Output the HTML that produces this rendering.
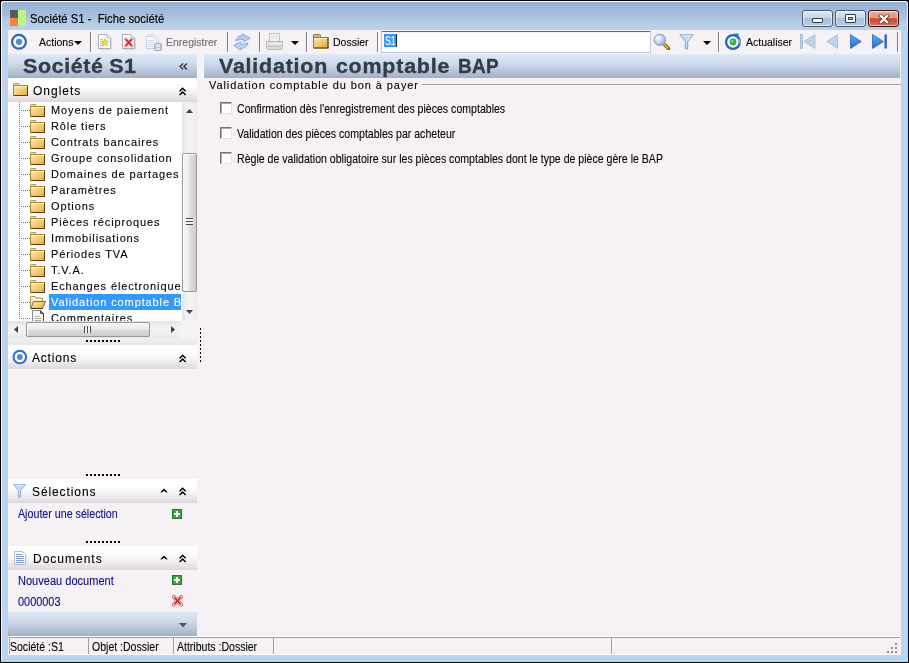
<!DOCTYPE html>
<html><head><meta charset="utf-8">
<style>
*{box-sizing:border-box}
html,body{margin:0;padding:0}
body{will-change:transform;width:909px;height:663px;overflow:hidden;position:relative;background:#000;font-family:"Liberation Sans",sans-serif;color:#000}
.a{position:absolute}
.t{position:absolute;white-space:pre;line-height:1;-webkit-text-stroke:0.1px currentColor}
.frame{left:1px;top:1px;width:907px;height:661px;background:#bed3ef;border-radius:3px 3px 0 0}
.titlebar{left:1px;top:1px;width:907px;height:29px;border-radius:3px 3px 0 0;border-top:1px solid #fff;border-left:1px solid #fff;border-right:1px solid #dfefff;background:linear-gradient(#97b3d4 0px,#a3bddb 12px,#b5cbe6 20px,#bad2ea 28px)}
.lframe{left:1px;top:30px;width:1px;height:632px;background:#f2f9ff}
.rframe{left:906px;top:30px;width:2px;height:632px;background:#9fdcf8}
.bframe{left:1px;top:660px;width:907px;height:2px;background:#9fe0f8}
.content{left:8px;top:30px;width:893px;height:625px;background:#f6f1f5}
.hdr{background:linear-gradient(#dde9f8 0%,#d0ddee 35%,#b7c7da 70%,#a2b0c6 100%)}
.ph{background:linear-gradient(#ffffff 0%,#fdfcfd 40%,#ebe9ec 75%,#dbd9dc 100%)}
.sep{position:absolute;top:32px;width:1px;height:20px;background:#7d7d7d;border-right:1px solid #fff;width:2px}
.tb{font-size:10.5px}
.big{font-size:20px;font-weight:bold;color:#333d47;transform:scaleX(1.07);letter-spacing:0.62px;word-spacing:1.5px;transform-origin:0 0;-webkit-text-stroke:0.35px #333d47}
.tree{font-size:11px;letter-spacing:0.88px}
.lnk{color:#0c0c86;font-size:12px;transform:scaleX(0.89);transform-origin:0 0}
.st{font-size:12px;transform:scaleX(0.877);transform-origin:0 0}
.cl{font-size:12.4px;transform:scaleX(0.853);transform-origin:0 0}
.tbtn{top:10px;width:31px;height:17px;border:1px solid #4d5d75;border-radius:3px;background:linear-gradient(#dfe9f5 0%,#c6d6e9 45%,#a9c0da 50%,#b9cfe6 100%);box-shadow:inset 0 0 0 1px rgba(255,255,255,.55)}
.close{border-color:#3a1410;background:linear-gradient(#eeb0a4 0%,#e29884 45%,#c9452b 52%,#d8735c 100%)}
.cb{position:absolute;width:12px;height:12px;border:1px solid #747474;border-right-color:#e2e2e2;border-bottom-color:#e2e2e2;background:#fff;box-shadow:inset 1px 1px 0 #a8a8a8}
</style></head><body>
<svg width="0" height="0" style="position:absolute"><defs><linearGradient id="fg2" x1="0" y1="0" x2="1" y2="1"><stop offset="0" stop-color="#fcecb4"/><stop offset="0.45" stop-color="#f4d27a"/><stop offset="1" stop-color="#e6a93a"/></linearGradient></defs></svg>
<div class="a frame"></div>
<div class="a titlebar"></div>
<div class="a lframe"></div>
<div class="a rframe"></div>
<div class="a bframe"></div>

<!-- app icon -->
<div class="a" style="left:10px;top:10px;width:8px;height:8px;background:#5c5c58"></div>
<div class="a" style="left:10px;top:18px;width:8px;height:8px;background:#f38143"></div>
<div class="a" style="left:18px;top:10px;width:8px;height:16px;background:#bbf588"></div>
<div class="t" style="left:30px;top:13px;font-size:12px;-webkit-text-stroke:0.15px #000;transform:scaleX(0.94);transform-origin:0 0;color:#000">Société S1 -  Fiche société</div>

<div class="a content"></div>


<!-- title buttons -->
<div class="a tbtn" style="left:802px"><div class="a" style="left:9px;top:7px;width:11px;height:5px;border:1px solid #2d3a4a;border-radius:1px;background:#fff"></div></div>
<div class="a tbtn" style="left:835px"><div class="a" style="left:9px;top:3px;width:11px;height:9px;border:1px solid #2d3a4a;border-radius:1px;background:#fff"><div class="a" style="left:2px;top:2px;width:5px;height:3px;border:1px solid #3a4656;background:#a8b4c4"></div></div></div>
<div class="a tbtn close" style="left:868px"><svg class="a" style="left:9px;top:3px" width="12" height="10" viewBox="0 0 12 10"><path d="M2.8 1.8 L9.2 8.2 M9.2 1.8 L2.8 8.2" stroke="#4a2018" stroke-width="4" stroke-linecap="square" opacity="0.7"/><path d="M2.8 1.8 L9.2 8.2 M9.2 1.8 L2.8 8.2" stroke="#fff" stroke-width="2.3" stroke-linecap="square"/></svg></div>

<!-- toolbar -->
<svg class="a" style="left:10px;top:33px" width="18" height="18" viewBox="0 0 18 18"><circle cx="9" cy="8.8" r="6.9" fill="#f8fbff" stroke="#2f64b8" stroke-width="2.2"/><circle cx="9" cy="8.8" r="3.1" fill="#4a8ae4"/></svg>
<div class="t tb" style="left:39px;top:37px">Actions</div>
<svg class="a" style="left:74px;top:41px" width="8" height="4" viewBox="0 0 8 4"><path d="M0 0H8L4 4Z" fill="#000"/></svg>
<div class="sep" style="left:90px"></div>
<!-- new -->
<svg class="a" style="left:98px;top:34px" width="15" height="16" viewBox="0 0 15 16"><path d="M0.5 0.5H9L12.5 4V14.5H0.5Z" fill="#fdfdfd" stroke="#aab0b8"/><path d="M9 0.5V4H12.5" fill="#e8ecf2" stroke="#b8bec8"/><path d="M13.5 4.5V15.5H1.5" stroke="#d8dce2" fill="none"/><path d="M2 5.5h3M2 7.5h3M2 9.5h3M2 11.5h3" stroke="#a8c0e8"/><path d="M7 4.6L8.1 7.1L10.7 7.3L8.7 9L9.4 11.6L7 10.2L4.6 11.6L5.3 9L3.3 7.3L5.9 7.1Z" fill="#f0ea30" stroke="#c8b020" stroke-width="0.7"/></svg>
<!-- delete -->
<svg class="a" style="left:122px;top:34px" width="15" height="16" viewBox="0 0 15 16"><path d="M0.5 0.5H9L12.5 4V14.5H0.5Z" fill="#fdfdfd" stroke="#aab0b8"/><path d="M9 0.5V4H12.5" fill="#e8ecf2" stroke="#b8bec8"/><path d="M13.5 4.5V15.5H1.5" stroke="#d8dce2" fill="none"/><path d="M3.5 5 L10 12 M10 5 L3.5 12" stroke="#f4a4a4" stroke-width="3.2" stroke-linecap="round"/><path d="M3.8 5.3 L9.7 11.7 M9.7 5.3 L3.8 11.7" stroke="#dc1c1c" stroke-width="1.5"/></svg>
<!-- save disabled -->
<svg class="a" style="left:146px;top:34px" width="17" height="17" viewBox="0 0 17 17"><path d="M2.5 0.5H9L12.5 4V12.5H2.5Z" fill="#f6f6fa" stroke="#d4d6e0"/><path d="M0.5 2.5H7L10.5 6V14.5H0.5Z" fill="#f8f8fc" stroke="#ccd0dc"/><path d="M2 6.5h6M2 8.5h6M2 10.5h6M2 12.5h5" stroke="#d0d8ea"/><rect x="8.5" y="9.5" width="7" height="7" rx="1" fill="#c4c0de" stroke="#aaa6cc"/><rect x="10" y="10.5" width="4" height="2" fill="#ecebf6"/><rect x="10" y="14" width="4" height="2" fill="#e0def0"/></svg>
<div class="t tb" style="left:166px;top:37px;color:#6d6d6d">Enregistrer</div>
<div class="sep" style="left:227px"></div>
<!-- refresh disabled -->
<svg class="a" style="left:230px;top:30px" width="24" height="24" viewBox="0 0 24 24"><path d="M5.8 11.2 C6.3 7.2 9 5.6 12.4 5.6 L12.2 3.8 L20.2 8.2 L13.8 11.8 L13.4 9.6 C10.2 9.3 7.6 9.8 5.8 11.2Z" fill="#b4cdf2" stroke="#86a2d2" stroke-width="0.9" stroke-linejoin="round"/><path d="M18 12.6 C17.4 16.6 14.6 18.3 10.8 18.4 L10.9 20.2 L3.8 15.6 L10.4 11.8 L10.7 14.1 C13.9 14.1 16.2 13.6 18 12.6Z" fill="#b4d2f4" stroke="#86a2d2" stroke-width="0.9" stroke-linejoin="round"/></svg>
<div class="sep" style="left:259px"></div>
<!-- printer disabled -->
<svg class="a" style="left:265px;top:33px" width="19" height="17" viewBox="0 0 19 17"><rect x="4.5" y="0.5" width="10" height="8" fill="#f2f2f2" stroke="#c4c4c4"/><path d="M6 3h7M6 5h7" stroke="#dedede"/><path d="M1.5 8.5 H17.5 V14.5 Q17.5 16.5 15.5 16.5 H3.5 Q1.5 16.5 1.5 14.5Z" fill="#dcdcdc" stroke="#b8b8b8"/><path d="M2 10.5H17" stroke="#f6f6f6"/><path d="M3 13.5H16" stroke="#c0c0c0"/></svg>
<svg class="a" style="left:291px;top:41px" width="8" height="4" viewBox="0 0 8 4"><path d="M0 0H8L4 4Z" fill="#000"/></svg>
<div class="sep" style="left:306px"></div>
<!-- folder -->
<svg class="a" style="left:313px;top:34px" width="16" height="15" viewBox="0 0 16 15"><defs><linearGradient id="fg" x1="0" y1="0" x2="1" y2="1"><stop offset="0" stop-color="#fbe6a4"/><stop offset="0.55" stop-color="#f0c868"/><stop offset="1" stop-color="#e0a238"/></linearGradient></defs><path d="M0.5 3.5 V1.2 Q0.5 0.5 1.2 0.5 H6.5 Q7.5 0.5 7.5 1.5 V3.5Z" fill="#c8b88a" stroke="#8a7a50"/><rect x="0.5" y="3.5" width="14.5" height="10.5" fill="url(#fg)" stroke="#9a7a38"/><path d="M1 14H15.5M15 4V14" stroke="#5e4614"/><path d="M1.5 4.5H14" stroke="#fff2c8"/></svg>
<div class="t tb" style="left:333px;top:37px">Dossier</div>
<div class="sep" style="left:377px"></div>
<!-- input -->
<div class="a" style="left:381px;top:31px;width:270px;height:22px;border:1px solid #c2cad4;border-top-color:#5d6a7a;border-radius:1px;background:#fff;box-shadow:inset 1px 1px 0 #eef2f6"></div>
<div class="a" style="left:384px;top:34px;width:13px;height:13px;background:#3399ff"></div>
<div class="a" style="left:396px;top:34px;width:1px;height:13px;background:#222"></div>
<div class="t" style="left:385px;top:35px;color:#fff;font-size:12.5px;transform:scaleX(0.7);transform-origin:0 0">S1</div>
<!-- magnifier -->
<svg class="a" style="left:653px;top:33px" width="18" height="17" viewBox="0 0 18 17"><defs><radialGradient id="mg" cx="0.35" cy="0.35" r="0.7"><stop offset="0" stop-color="#ffffff"/><stop offset="0.5" stop-color="#c8dcf4"/><stop offset="1" stop-color="#88aedc"/></radialGradient></defs><path d="M10 10 L15.5 15.5" stroke="#7a5a10" stroke-width="3.4" stroke-linecap="round"/><path d="M10.3 10.3 L15 15" stroke="#e8b848" stroke-width="1.6" stroke-linecap="round"/><circle cx="6.8" cy="6.8" r="5.6" fill="url(#mg)" stroke="#7a98c0" stroke-width="1"/></svg>
<!-- funnel -->
<svg class="a" style="left:679px;top:34px" width="15" height="16" viewBox="0 0 15 16"><path d="M0.8 0.8 H14.2 L8.7 7.5 V15 H6.3 V7.5Z" fill="#c4d8f2" stroke="#8aa6cc" stroke-width="1"/><path d="M3 2 H12 L8 6.5" stroke="#e6f0fc" fill="none"/></svg>
<svg class="a" style="left:703px;top:41px" width="8" height="4" viewBox="0 0 8 4"><path d="M0 0H8L4 4Z" fill="#000"/></svg>
<div class="sep" style="left:718px"></div>
<!-- actualiser -->
<svg class="a" style="left:724px;top:33px" width="18" height="18" viewBox="0 0 18 18"><circle cx="9" cy="9" r="6.9" fill="#f4fbff" stroke="#2c62b4" stroke-width="2.3"/><path d="M15.2 6.2 A6.9 6.9 0 0 1 15.6 11" fill="none" stroke="#8ca8c8" stroke-width="2.3"/><path d="M9.5 0.8 L14.6 0.6 L14.2 5.6Z" fill="#2c6ad0"/><circle cx="9" cy="9" r="3.4" fill="#2eb82c"/><circle cx="8.3" cy="8.2" r="1.3" fill="#7ede78"/></svg>
<div class="t tb" style="left:746px;top:37px">Actualiser</div>
<!-- nav -->
<svg class="a" style="left:800px;top:34px" width="16" height="15" viewBox="0 0 16 15"><rect x="0.5" y="0.5" width="2" height="14" fill="#b6cde8" stroke="#a2b8d4" stroke-width="0.8"/><path d="M15 0.5 V14.5 L4 7.5Z" fill="#bcd4f0" stroke="#a2bcdc" stroke-width="0.8"/></svg>
<svg class="a" style="left:826px;top:34px" width="12" height="15" viewBox="0 0 12 15"><path d="M11.5 0.5 V14.5 L0.8 7.5Z" fill="#bcd4f0" stroke="#a2bcdc" stroke-width="0.8"/></svg>
<svg class="a" style="left:850px;top:34px" width="12" height="15" viewBox="0 0 12 15"><defs><linearGradient id="ng" x1="0" y1="0" x2="0" y2="1"><stop offset="0" stop-color="#5cb0f8"/><stop offset="1" stop-color="#1c6ad8"/></linearGradient></defs><path d="M0.5 0.5 V14.5 L11.2 7.5Z" fill="url(#ng)" stroke="#2a64c0" stroke-width="0.8"/></svg>
<svg class="a" style="left:872px;top:34px" width="16" height="15" viewBox="0 0 16 15"><path d="M0.5 0.5 V14.5 L11.5 7.5Z" fill="url(#ng)" stroke="#2a64c0" stroke-width="0.8"/><rect x="12.5" y="0.5" width="2.4" height="14" fill="#2a64c0"/></svg>
<div class="sep" style="left:897px"></div>

<!-- left panel -->
<div class="a hdr" style="left:8px;top:54px;width:189px;height:24px"></div>
<div class="t big" style="left:23px;top:56px;letter-spacing:0.6px;word-spacing:-1px">Société S1</div>
<svg class="a" style="left:179px;top:63px" width="9" height="8" viewBox="0 0 9 8"><path d="M4.2 0.6L1 3.6L4.2 6.6M8 0.6L4.8 3.6L8 6.6" fill="none" stroke="#2c3640" stroke-width="1.35"/></svg>
<div class="a ph" style="left:8px;top:78px;width:189px;height:24px"></div>
<svg class="a" style="left:13px;top:83px" width="15" height="13" viewBox="0 0 15 13"><path d="M0.5 2.5 V1.2 Q0.5 0.5 1.2 0.5 H5.3 Q6 0.5 6 1.2 V2.5Z" fill="#f6e2a0" stroke="#b89850"/><rect x="0.5" y="2.5" width="14" height="10" fill="url(#fg2)" stroke="#a8822e"/><path d="M1 12.5H15M14.5 3V12.5" stroke="#5a3e0e"/><path d="M1 3.5H14" stroke="#fff6d0"/></svg>
<div class="t" style="left:33px;top:85px;font-size:12px;letter-spacing:1px">Onglets</div>
<svg class="a" style="left:179px;top:87px" width="8" height="9" viewBox="0 0 8 9"><path d="M0.6 4.3L3.6 1.2L6.6 4.3M0.6 8.1L3.6 5L6.6 8.1" fill="none" stroke="#000" stroke-width="1.45"/></svg>
<div class="a" style="left:8px;top:102px;width:174px;height:219px;background:#fff;overflow:hidden"><div class="a" style="left:11px;top:0px;width:1px;height:217px;background:repeating-linear-gradient(#808080 0 1px,transparent 1px 2px)"></div><div class="a" style="left:12px;top:8px;width:10px;height:1px;background:repeating-linear-gradient(90deg,transparent 0 1px,#808080 1px 2px)"></div><svg class="a" style="left:22px;top:2px" width="15" height="13" viewBox="0 0 15 13"><path d="M0.5 2.5 V1.2 Q0.5 0.5 1.2 0.5 H5.3 Q6 0.5 6 1.2 V2.5Z" fill="#f6e2a0" stroke="#b89850"/><rect x="0.5" y="2.5" width="14" height="10" fill="url(#fg2)" stroke="#a8822e"/><path d="M1 12.5H15M14.5 3V12.5" stroke="#5a3e0e"/><path d="M1 3.5H14" stroke="#fff6d0"/></svg><div class="t tree" style="left:43px;top:0px;line-height:16px">Moyens de paiement</div><div class="a" style="left:12px;top:24px;width:10px;height:1px;background:repeating-linear-gradient(90deg,transparent 0 1px,#808080 1px 2px)"></div><svg class="a" style="left:22px;top:18px" width="15" height="13" viewBox="0 0 15 13"><path d="M0.5 2.5 V1.2 Q0.5 0.5 1.2 0.5 H5.3 Q6 0.5 6 1.2 V2.5Z" fill="#f6e2a0" stroke="#b89850"/><rect x="0.5" y="2.5" width="14" height="10" fill="url(#fg2)" stroke="#a8822e"/><path d="M1 12.5H15M14.5 3V12.5" stroke="#5a3e0e"/><path d="M1 3.5H14" stroke="#fff6d0"/></svg><div class="t tree" style="left:43px;top:16px;line-height:16px">Rôle tiers</div><div class="a" style="left:12px;top:40px;width:10px;height:1px;background:repeating-linear-gradient(90deg,transparent 0 1px,#808080 1px 2px)"></div><svg class="a" style="left:22px;top:34px" width="15" height="13" viewBox="0 0 15 13"><path d="M0.5 2.5 V1.2 Q0.5 0.5 1.2 0.5 H5.3 Q6 0.5 6 1.2 V2.5Z" fill="#f6e2a0" stroke="#b89850"/><rect x="0.5" y="2.5" width="14" height="10" fill="url(#fg2)" stroke="#a8822e"/><path d="M1 12.5H15M14.5 3V12.5" stroke="#5a3e0e"/><path d="M1 3.5H14" stroke="#fff6d0"/></svg><div class="t tree" style="left:43px;top:32px;line-height:16px">Contrats bancaires</div><div class="a" style="left:12px;top:56px;width:10px;height:1px;background:repeating-linear-gradient(90deg,transparent 0 1px,#808080 1px 2px)"></div><svg class="a" style="left:22px;top:50px" width="15" height="13" viewBox="0 0 15 13"><path d="M0.5 2.5 V1.2 Q0.5 0.5 1.2 0.5 H5.3 Q6 0.5 6 1.2 V2.5Z" fill="#f6e2a0" stroke="#b89850"/><rect x="0.5" y="2.5" width="14" height="10" fill="url(#fg2)" stroke="#a8822e"/><path d="M1 12.5H15M14.5 3V12.5" stroke="#5a3e0e"/><path d="M1 3.5H14" stroke="#fff6d0"/></svg><div class="t tree" style="left:43px;top:48px;line-height:16px">Groupe consolidation</div><div class="a" style="left:12px;top:72px;width:10px;height:1px;background:repeating-linear-gradient(90deg,transparent 0 1px,#808080 1px 2px)"></div><svg class="a" style="left:22px;top:66px" width="15" height="13" viewBox="0 0 15 13"><path d="M0.5 2.5 V1.2 Q0.5 0.5 1.2 0.5 H5.3 Q6 0.5 6 1.2 V2.5Z" fill="#f6e2a0" stroke="#b89850"/><rect x="0.5" y="2.5" width="14" height="10" fill="url(#fg2)" stroke="#a8822e"/><path d="M1 12.5H15M14.5 3V12.5" stroke="#5a3e0e"/><path d="M1 3.5H14" stroke="#fff6d0"/></svg><div class="t tree" style="left:43px;top:64px;line-height:16px">Domaines de partages</div><div class="a" style="left:12px;top:88px;width:10px;height:1px;background:repeating-linear-gradient(90deg,transparent 0 1px,#808080 1px 2px)"></div><svg class="a" style="left:22px;top:82px" width="15" height="13" viewBox="0 0 15 13"><path d="M0.5 2.5 V1.2 Q0.5 0.5 1.2 0.5 H5.3 Q6 0.5 6 1.2 V2.5Z" fill="#f6e2a0" stroke="#b89850"/><rect x="0.5" y="2.5" width="14" height="10" fill="url(#fg2)" stroke="#a8822e"/><path d="M1 12.5H15M14.5 3V12.5" stroke="#5a3e0e"/><path d="M1 3.5H14" stroke="#fff6d0"/></svg><div class="t tree" style="left:43px;top:80px;line-height:16px">Paramètres</div><div class="a" style="left:12px;top:104px;width:10px;height:1px;background:repeating-linear-gradient(90deg,transparent 0 1px,#808080 1px 2px)"></div><svg class="a" style="left:22px;top:98px" width="15" height="13" viewBox="0 0 15 13"><path d="M0.5 2.5 V1.2 Q0.5 0.5 1.2 0.5 H5.3 Q6 0.5 6 1.2 V2.5Z" fill="#f6e2a0" stroke="#b89850"/><rect x="0.5" y="2.5" width="14" height="10" fill="url(#fg2)" stroke="#a8822e"/><path d="M1 12.5H15M14.5 3V12.5" stroke="#5a3e0e"/><path d="M1 3.5H14" stroke="#fff6d0"/></svg><div class="t tree" style="left:43px;top:96px;line-height:16px">Options</div><div class="a" style="left:12px;top:120px;width:10px;height:1px;background:repeating-linear-gradient(90deg,transparent 0 1px,#808080 1px 2px)"></div><svg class="a" style="left:22px;top:114px" width="15" height="13" viewBox="0 0 15 13"><path d="M0.5 2.5 V1.2 Q0.5 0.5 1.2 0.5 H5.3 Q6 0.5 6 1.2 V2.5Z" fill="#f6e2a0" stroke="#b89850"/><rect x="0.5" y="2.5" width="14" height="10" fill="url(#fg2)" stroke="#a8822e"/><path d="M1 12.5H15M14.5 3V12.5" stroke="#5a3e0e"/><path d="M1 3.5H14" stroke="#fff6d0"/></svg><div class="t tree" style="left:43px;top:112px;line-height:16px">Pièces réciproques</div><div class="a" style="left:12px;top:136px;width:10px;height:1px;background:repeating-linear-gradient(90deg,transparent 0 1px,#808080 1px 2px)"></div><svg class="a" style="left:22px;top:130px" width="15" height="13" viewBox="0 0 15 13"><path d="M0.5 2.5 V1.2 Q0.5 0.5 1.2 0.5 H5.3 Q6 0.5 6 1.2 V2.5Z" fill="#f6e2a0" stroke="#b89850"/><rect x="0.5" y="2.5" width="14" height="10" fill="url(#fg2)" stroke="#a8822e"/><path d="M1 12.5H15M14.5 3V12.5" stroke="#5a3e0e"/><path d="M1 3.5H14" stroke="#fff6d0"/></svg><div class="t tree" style="left:43px;top:128px;line-height:16px">Immobilisations</div><div class="a" style="left:12px;top:152px;width:10px;height:1px;background:repeating-linear-gradient(90deg,transparent 0 1px,#808080 1px 2px)"></div><svg class="a" style="left:22px;top:146px" width="15" height="13" viewBox="0 0 15 13"><path d="M0.5 2.5 V1.2 Q0.5 0.5 1.2 0.5 H5.3 Q6 0.5 6 1.2 V2.5Z" fill="#f6e2a0" stroke="#b89850"/><rect x="0.5" y="2.5" width="14" height="10" fill="url(#fg2)" stroke="#a8822e"/><path d="M1 12.5H15M14.5 3V12.5" stroke="#5a3e0e"/><path d="M1 3.5H14" stroke="#fff6d0"/></svg><div class="t tree" style="left:43px;top:144px;line-height:16px">Périodes TVA</div><div class="a" style="left:12px;top:168px;width:10px;height:1px;background:repeating-linear-gradient(90deg,transparent 0 1px,#808080 1px 2px)"></div><svg class="a" style="left:22px;top:162px" width="15" height="13" viewBox="0 0 15 13"><path d="M0.5 2.5 V1.2 Q0.5 0.5 1.2 0.5 H5.3 Q6 0.5 6 1.2 V2.5Z" fill="#f6e2a0" stroke="#b89850"/><rect x="0.5" y="2.5" width="14" height="10" fill="url(#fg2)" stroke="#a8822e"/><path d="M1 12.5H15M14.5 3V12.5" stroke="#5a3e0e"/><path d="M1 3.5H14" stroke="#fff6d0"/></svg><div class="t tree" style="left:43px;top:160px;line-height:16px">T.V.A.</div><div class="a" style="left:12px;top:184px;width:10px;height:1px;background:repeating-linear-gradient(90deg,transparent 0 1px,#808080 1px 2px)"></div><svg class="a" style="left:22px;top:178px" width="15" height="13" viewBox="0 0 15 13"><path d="M0.5 2.5 V1.2 Q0.5 0.5 1.2 0.5 H5.3 Q6 0.5 6 1.2 V2.5Z" fill="#f6e2a0" stroke="#b89850"/><rect x="0.5" y="2.5" width="14" height="10" fill="url(#fg2)" stroke="#a8822e"/><path d="M1 12.5H15M14.5 3V12.5" stroke="#5a3e0e"/><path d="M1 3.5H14" stroke="#fff6d0"/></svg><div class="t tree" style="left:43px;top:176px;line-height:16px">Echanges électroniques</div><div class="a" style="left:12px;top:200px;width:10px;height:1px;background:repeating-linear-gradient(90deg,transparent 0 1px,#808080 1px 2px)"></div><div class="a" style="left:41px;top:192px;width:132px;height:16px;background:#3399ff"></div><svg class="a" style="left:22px;top:194px" width="16" height="13" viewBox="0 0 16 13"><path d="M0.5 12.5 V1.2 Q0.5 0.5 1.2 0.5 H5 L6 2 H12.5 V5" fill="#fbf0c8" stroke="#a89060"/><path d="M0.8 12.5 L3.5 5.5 H15.5 L12.5 12.5Z" fill="url(#fg2)" stroke="#8a6420"/><path d="M1 12.5H12.5" stroke="#4a3008"/></svg><div class="t tree" style="left:43px;top:192px;line-height:16px;color:#fff">Validation comptable B</div><div class="a" style="left:12px;top:216px;width:10px;height:1px;background:repeating-linear-gradient(90deg,transparent 0 1px,#808080 1px 2px)"></div><svg class="a" style="left:24px;top:208px" width="13" height="16" viewBox="0 0 13 16"><path d="M0.5 15.5V0.5H8.5L11.5 3.5V15.5" fill="#fbfbe4" stroke="#7a8aa0"/><path d="M8.5 0.5V3.5H11.5Z" fill="#4a6aa8" stroke="#3a5a90"/><path d="M11.5 3.5V15.5" stroke="#404850"/><path d="M2.5 6.5h5M2.5 8.5h7M2.5 10.5h7M2.5 12.5h7" stroke="#a8b098"/></svg><div class="t tree" style="left:43px;top:208px;line-height:16px">Commentaires</div></div><div class="a" style="left:182px;top:102px;width:15px;height:219px;background:linear-gradient(90deg,#e6e6e6,#f2f2f2 40%,#f2f2f2 70%,#e9e9e9)"></div>
<svg class="a" style="left:186px;top:109px" width="7" height="4" viewBox="0 0 7 4"><path d="M0 4H7L3.5 0Z" fill="#404040"/></svg>
<div class="a" style="left:182px;top:153px;width:15px;height:139px;border:1px solid #979797;border-radius:2px;background:linear-gradient(90deg,#f6f6f6,#ececec 45%,#dcdcdc 55%,#cfcfcf);box-shadow:inset 1px 1px 0 #fff"></div>
<div class="a" style="left:186px;top:218px;width:7px;height:7px;background:repeating-linear-gradient(#4a4a4a 0 1px,#f4f4f4 1px 3px)"></div>
<svg class="a" style="left:186px;top:310px" width="7" height="4" viewBox="0 0 7 4"><path d="M0 0H7L3.5 4Z" fill="#404040"/></svg>
<!-- horizontal scrollbar -->
<div class="a" style="left:8px;top:321px;width:173px;height:17px;background:linear-gradient(#e2e2e2,#f2f2f2 35%,#f2f2f2 70%,#e9e9e9)"></div>
<svg class="a" style="left:14px;top:326px" width="4" height="7" viewBox="0 0 4 7"><path d="M4 0V7L0 3.5Z" fill="#404040"/></svg>
<div class="a" style="left:26px;top:322px;width:124px;height:15px;border:1px solid #979797;border-radius:2px;background:linear-gradient(#f6f6f6,#ececec 45%,#dcdcdc 55%,#cfcfcf);box-shadow:inset 1px 1px 0 #fff"></div>
<div class="a" style="left:84px;top:326px;width:7px;height:7px;background:repeating-linear-gradient(90deg,#4a4a4a 0 1px,#f4f4f4 1px 3px)"></div>
<svg class="a" style="left:171px;top:326px" width="4" height="7" viewBox="0 0 4 7"><path d="M0 0V7L4 3.5Z" fill="#404040"/></svg>
<div class="a" style="left:8px;top:338px;width:189px;height:7px;background:linear-gradient(#f0eff1,#e9e8ea)"></div>
<div class="a" style="left:86px;top:340px;width:34px;height:2px;background:repeating-linear-gradient(90deg,#000 0 2px,transparent 2px 4px)"></div>
<div class="a ph" style="left:8px;top:345px;width:189px;height:24px"></div>
<svg class="a" style="left:12px;top:349px" width="16" height="16" viewBox="0 0 16 16"><circle cx="7.8" cy="8" r="6.3" fill="#f8fbff" stroke="#3a6cc0" stroke-width="2"/><circle cx="7.8" cy="8" r="2.9" fill="#4a8ae4"/></svg>
<div class="t" style="left:32px;top:352px;font-size:12px;letter-spacing:0.8px">Actions</div>
<svg class="a" style="left:179px;top:354px" width="8" height="9" viewBox="0 0 8 9"><path d="M0.6 4.3L3.6 1.2L6.6 4.3M0.6 8.1L3.6 5L6.6 8.1" fill="none" stroke="#000" stroke-width="1.45"/></svg>
<div class="a" style="left:200px;top:328px;width:1px;height:34px;background:repeating-linear-gradient(#000 0 2px,transparent 2px 4px)"></div>
<div class="a" style="left:86px;top:474px;width:34px;height:2px;background:repeating-linear-gradient(90deg,#000 0 2px,transparent 2px 4px)"></div>
<div class="a ph" style="left:8px;top:479px;width:189px;height:24px"></div>
<svg class="a" style="left:13px;top:484px" width="14" height="14" viewBox="0 0 14 14"><path d="M0.6 0.6 H12.4 L7.6 6.5 V13.2 H5.4 V6.5Z" fill="#c8dcf6" stroke="#8ea8d0" stroke-width="0.9" stroke-linejoin="round"/><path d="M2.5 1.6 H10.5" stroke="#eef4fc"/></svg>
<div class="t" style="left:32px;top:486px;font-size:12px;letter-spacing:0.9px">Sélections</div>
<svg class="a" style="left:160px;top:488px" width="8" height="5" viewBox="0 0 8 5"><path d="M0.3 4.2L4 0.6L7.7 4.2L6.2 4.6L4 2.8L1.8 4.6Z" fill="#000"/></svg>
<svg class="a" style="left:179px;top:487px" width="8" height="9" viewBox="0 0 8 9"><path d="M0.6 4.3L3.6 1.2L6.6 4.3M0.6 8.1L3.6 5L6.6 8.1" fill="none" stroke="#000" stroke-width="1.45"/></svg>
<div class="t lnk" style="left:18px;top:508px">Ajouter une sélection</div>
<svg class="a" style="left:172px;top:509px" width="10" height="10" viewBox="0 0 10 10"><rect x="0.5" y="0.5" width="9" height="9" fill="#38a838" stroke="#2a7a2a"/><path d="M5 2V8M2 5H8" stroke="#fff" stroke-width="2"/></svg>
<div class="a" style="left:86px;top:541px;width:34px;height:2px;background:repeating-linear-gradient(90deg,#000 0 2px,transparent 2px 4px)"></div>
<div class="a ph" style="left:8px;top:546px;width:189px;height:24px"></div>
<svg class="a" style="left:14px;top:551px" width="13" height="15" viewBox="0 0 13 15"><path d="M0.5 0.5H8.5L11.5 3.5V13.5H0.5Z" fill="#f8faff" stroke="#b4bccc"/><path d="M12.5 4V14.5H1.5" fill="none" stroke="#dfe3ea"/><path d="M2 3.5h6M2 5.5h8M2 7.5h8M2 9.5h8M2 11.5h8" stroke="#7c9ce0"/></svg>
<div class="t" style="left:33px;top:553px;font-size:12px;letter-spacing:1px">Documents</div>
<svg class="a" style="left:160px;top:555px" width="8" height="5" viewBox="0 0 8 5"><path d="M0.3 4.2L4 0.6L7.7 4.2L6.2 4.6L4 2.8L1.8 4.6Z" fill="#000"/></svg>
<svg class="a" style="left:179px;top:554px" width="8" height="9" viewBox="0 0 8 9"><path d="M0.6 4.3L3.6 1.2L6.6 4.3M0.6 8.1L3.6 5L6.6 8.1" fill="none" stroke="#000" stroke-width="1.45"/></svg>
<div class="t lnk" style="left:18px;top:575px;transform:scaleX(0.92)">Nouveau document</div>
<svg class="a" style="left:172px;top:575px" width="10" height="10" viewBox="0 0 10 10"><rect x="0.5" y="0.5" width="9" height="9" fill="#38a838" stroke="#2a7a2a"/><path d="M5 2V8M2 5H8" stroke="#fff" stroke-width="2"/></svg>
<div class="t lnk" style="left:18px;top:596px;transform:scaleX(0.91)">0000003</div>
<svg class="a" style="left:172px;top:595px" width="11" height="12" viewBox="0 0 11 12"><path d="M2 2L9 9.5M9 2L2 9.5" stroke="#d84040" stroke-width="4" stroke-linecap="round"/><path d="M2 2L9 9.5M9 2L2 9.5" stroke="#fbe2e2" stroke-width="2.6" stroke-linecap="round"/><path d="M2.3 2.3L8.7 9.2M8.7 2.3L2.3 9.2" stroke="#c41a1a" stroke-width="1.5"/></svg>
<div class="a hdr" style="left:8px;top:612px;width:189px;height:24px"></div>
<svg class="a" style="left:179px;top:623px" width="8" height="5" viewBox="0 0 8 5"><path d="M0 0H8L4 4.5Z" fill="#4a5868"/></svg>

<!-- right panel -->
<div class="a" style="left:197px;top:54px;width:1px;height:24px;background:#fdfdff"></div>
<div class="a" style="left:203px;top:54px;width:1px;height:24px;background:#fdfdff"></div>
<div class="a hdr" style="left:204px;top:54px;width:696px;height:24px"></div>
<div class="t big" style="left:219px;top:56px;letter-spacing:0.75px;word-spacing:1px">Validation comptable</div>
<div class="t big" style="left:458px;top:56px;transform:scaleX(0.95);letter-spacing:0.3px">BAP</div>
<div class="t" style="left:209px;top:80px;font-size:11px;letter-spacing:0.92px">Validation comptable du bon à payer</div>
<div class="a" style="left:422px;top:84px;width:479px;height:1px;background:#a0a0a0"></div>
<div class="a" style="left:422px;top:85px;width:479px;height:1px;background:#fff"></div>
<div class="cb" style="left:220px;top:102px"></div>
<div class="t cl" style="left:237px;top:103px">Confirmation dès l'enregistrement des pièces comptables</div>
<div class="cb" style="left:220px;top:127px"></div>
<div class="t cl" style="left:237px;top:128px">Validation des pièces comptables par acheteur</div>
<div class="cb" style="left:220px;top:152px"></div>
<div class="t cl" style="left:237px;top:153px">Règle de validation obligatoire sur les pièces comptables dont le type de pièce gère le BAP</div>

<!-- status bar -->
<div class="a" style="left:8px;top:636px;width:893px;height:1px;background:#fff"></div>
<div class="a" style="left:9px;top:637px;width:891px;height:1px;background:#a0a0a0"></div>
<div class="a" style="left:9px;top:637px;width:1px;height:17px;background:#a0a0a0"></div>
<div class="a" style="left:8px;top:654px;width:893px;height:1px;background:#fff"></div>
<div class="a" style="left:88px;top:638px;width:1px;height:16px;background:#a0a0a0"></div>
<div class="a" style="left:173px;top:638px;width:1px;height:16px;background:#a0a0a0"></div>
<div class="a" style="left:273px;top:638px;width:1px;height:16px;background:#a0a0a0"></div>
<div class="a" style="left:611px;top:638px;width:1px;height:16px;background:#a0a0a0"></div>
<div class="t st" style="left:10px;top:641px">Société :S1</div>
<div class="t st" style="left:92px;top:641px">Objet :Dossier</div>
<div class="t st" style="left:177px;top:641px">Attributs :Dossier</div>
<svg class="a" style="left:886px;top:642px" width="12" height="12" viewBox="0 0 12 12"><g fill="#8c8c8c"><rect x="9" y="1" width="2" height="2"/><rect x="5" y="5" width="2" height="2"/><rect x="9" y="5" width="2" height="2"/><rect x="1" y="9" width="2" height="2"/><rect x="5" y="9" width="2" height="2"/><rect x="9" y="9" width="2" height="2"/></g></svg>

</body></html>
